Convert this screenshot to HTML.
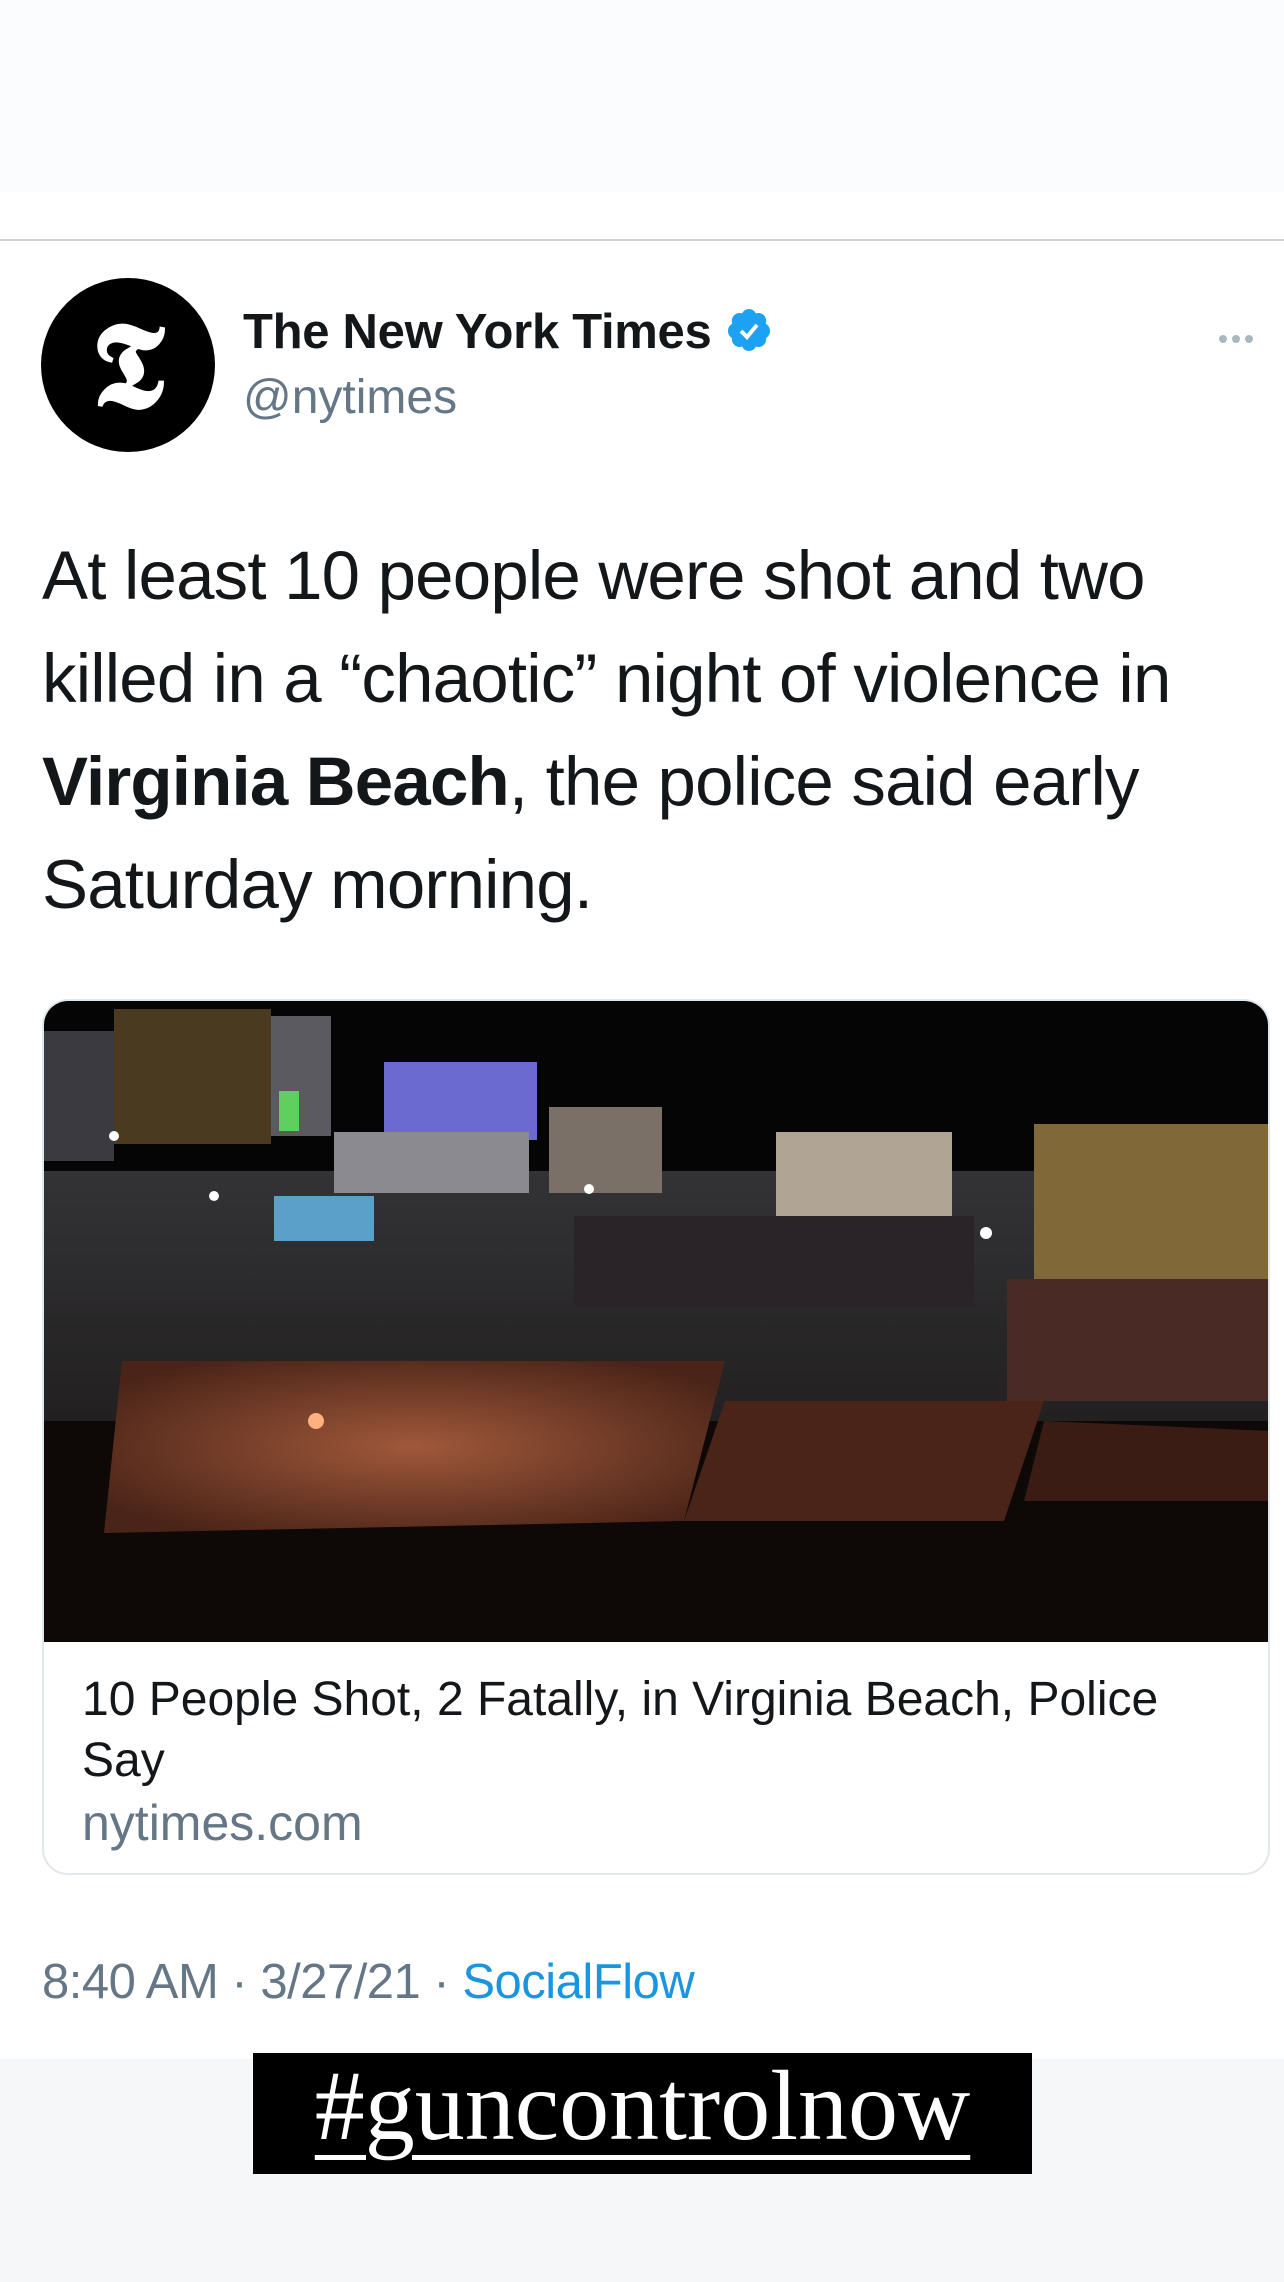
<!DOCTYPE html>
<html><head><meta charset="utf-8"><style>
*{margin:0;padding:0;box-sizing:border-box}
body{width:1284px;height:2282px;background:#fff;font-family:"Liberation Sans",sans-serif;position:relative;overflow:hidden}
.top{position:absolute;left:0;top:0;width:1284px;height:192px;background:#fbfcfd}
.sep{position:absolute;left:0;top:239px;width:1284px;height:2px;background:#cfd3d7}
.av{position:absolute;left:41px;top:278px;width:174px;height:174px;border-radius:50%;background:#000}
.av span{position:absolute;left:0;top:20px;width:174px;text-align:center;color:#fff;font-family:"Liberation Serif",serif;font-weight:bold;font-size:120px}
.name{position:absolute;left:243px;top:304px;font-size:49px;font-weight:bold;color:#14171a;letter-spacing:-0.3px}
.handle{position:absolute;left:243px;top:370px;font-size:48px;color:#657786}
.dots{position:absolute;left:1219px;top:330px}
.dots i{display:inline-block;width:8px;height:8px;border-radius:50%;background:#aab8c2;margin-right:5px}
.text{position:absolute;left:42px;top:524px;font-size:69px;line-height:103px;color:#14171a;width:1230px;letter-spacing:-0.8px}
.card{position:absolute;left:42px;top:999px;width:1228px;height:876px;border:2px solid #e1e8ed;border-radius:26px;overflow:hidden}
.card svg{display:block}
.ct{position:absolute;left:38px;top:668px;font-size:48px;line-height:61px;color:#14171a;width:1150px}
.cu{position:absolute;left:38px;top:793px;font-size:50px;color:#657786}
.ts{position:absolute;left:42px;top:1954px;font-size:49px;color:#657786;letter-spacing:-0.5px}
.ts b{font-weight:normal;color:#1b95e0}
.bot{position:absolute;left:0;top:2059px;width:1284px;height:223px;background:#f5f7f8}
.tag{position:absolute;left:253px;top:2053px;width:779px;height:121px;background:#000;color:#fff;font-family:"Liberation Serif",serif;font-size:100px;text-align:center;line-height:106px;text-decoration:underline;text-decoration-thickness:5px;text-underline-offset:16px}
</style></head><body>
<div class="top"></div>
<div class="sep"></div>
<div class="av"><span>𝕿</span></div>
<div class="name">The New York Times <svg width="48" height="48" viewBox="0 0 24 24" style="vertical-align:-6px"><path fill="#1da1f2" d="M22.5 12.5c0-1.58-.875-2.95-2.148-3.6.154-.435.238-.905.238-1.4 0-2.210-1.710-3.998-3.818-3.998-.47 0-.92.084-1.336.25C14.818 2.415 13.51 1.5 12 1.5s-2.816.917-3.437 2.25c-.415-.165-.866-.25-1.336-.25-2.11 0-3.818 1.790-3.818 4 0 .494.083.964.237 1.4-1.272.65-2.147 2.018-2.147 3.6 0 1.495.782 2.798 1.942 3.486-.02.17-.032.34-.032.514 0 2.210 1.708 4 3.818 4 .47 0 .92-.086 1.335-.25.62 1.334 1.926 2.250 3.437 2.250 1.512 0 2.818-.916 3.437-2.250.415.163.865.248 1.336.248 2.11 0 3.818-1.790 3.818-4 0-.174-.012-.344-.033-.513 1.158-.687 1.943-1.990 1.943-3.484z"/><path fill="none" stroke="#fff" stroke-width="2" d="M8 12.5l3 3 5-6"/></svg></div>
<div class="handle">@nytimes</div>
<div class="dots"><i></i><i></i><i></i></div>
<div class="text">At least 10 people were shot and two killed in a “chaotic” night of violence in <b>Virginia Beach</b>, the police said early Saturday morning.</div>
<div class="card">
<svg width="1228" height="641" viewBox="0 0 1228 641">
<defs>
<radialGradient id="o" cx="0.5" cy="0.5" r="0.6"><stop offset="0" stop-color="#a0583a"/><stop offset="1" stop-color="#4a2418"/></radialGradient>
<linearGradient id="g" x1="0" y1="0" x2="0" y2="1"><stop offset="0" stop-color="#333336"/><stop offset="1" stop-color="#222020"/></linearGradient>
</defs>
<rect width="1228" height="641" fill="#050505"/>
<rect x="0" y="170" width="1228" height="250" fill="url(#g)"/>
<rect x="0" y="30" width="70" height="130" fill="#3a3a40"/>
<rect x="70" y="8" width="157" height="135" fill="#4a3a20"/>
<rect x="227" y="15" width="60" height="120" fill="#5a5a60"/>
<rect x="235" y="90" width="20" height="40" fill="#5fd060"/>
<rect x="340" y="61" width="153" height="78" fill="#6a6ad0"/>
<rect x="290" y="131" width="195" height="61" fill="#8a8a90"/>
<rect x="505" y="106" width="113" height="86" fill="#7a7068"/>
<rect x="732" y="131" width="176" height="90" fill="#b0a494"/>
<rect x="990" y="123" width="238" height="163" fill="#806838"/>
<rect x="230" y="195" width="100" height="45" fill="#5aa0c8"/>
<rect x="530" y="215" width="400" height="90" fill="#2a2428"/>
<rect x="963" y="278" width="265" height="122" fill="#4a2a24"/>
<rect x="0" y="420" width="1228" height="221" fill="#0e0806"/>
<polygon points="78,360 681,360 640,520 60,532" fill="url(#o)"/>
<polygon points="681,400 1000,400 960,520 640,520" fill="#4a2418"/>
<polygon points="1000,420 1228,430 1228,500 980,500" fill="#3a1c14"/>
<circle cx="272" cy="420" r="8" fill="#ffb080"/>
<circle cx="70" cy="135" r="5" fill="#fff"/>
<circle cx="545" cy="188" r="5" fill="#fff"/>
<circle cx="942" cy="232" r="6" fill="#fff"/>
<circle cx="170" cy="195" r="5" fill="#fff"/>
</svg>
<div class="ct">10 People Shot, 2 Fatally, in Virginia Beach, Police Say</div>
<div class="cu">nytimes.com</div>
</div>
<div class="ts">8:40 AM · 3/27/21 · <b>SocialFlow</b></div>
<div class="bot"></div>
<div class="tag">#guncontrolnow</div>
</body></html>
